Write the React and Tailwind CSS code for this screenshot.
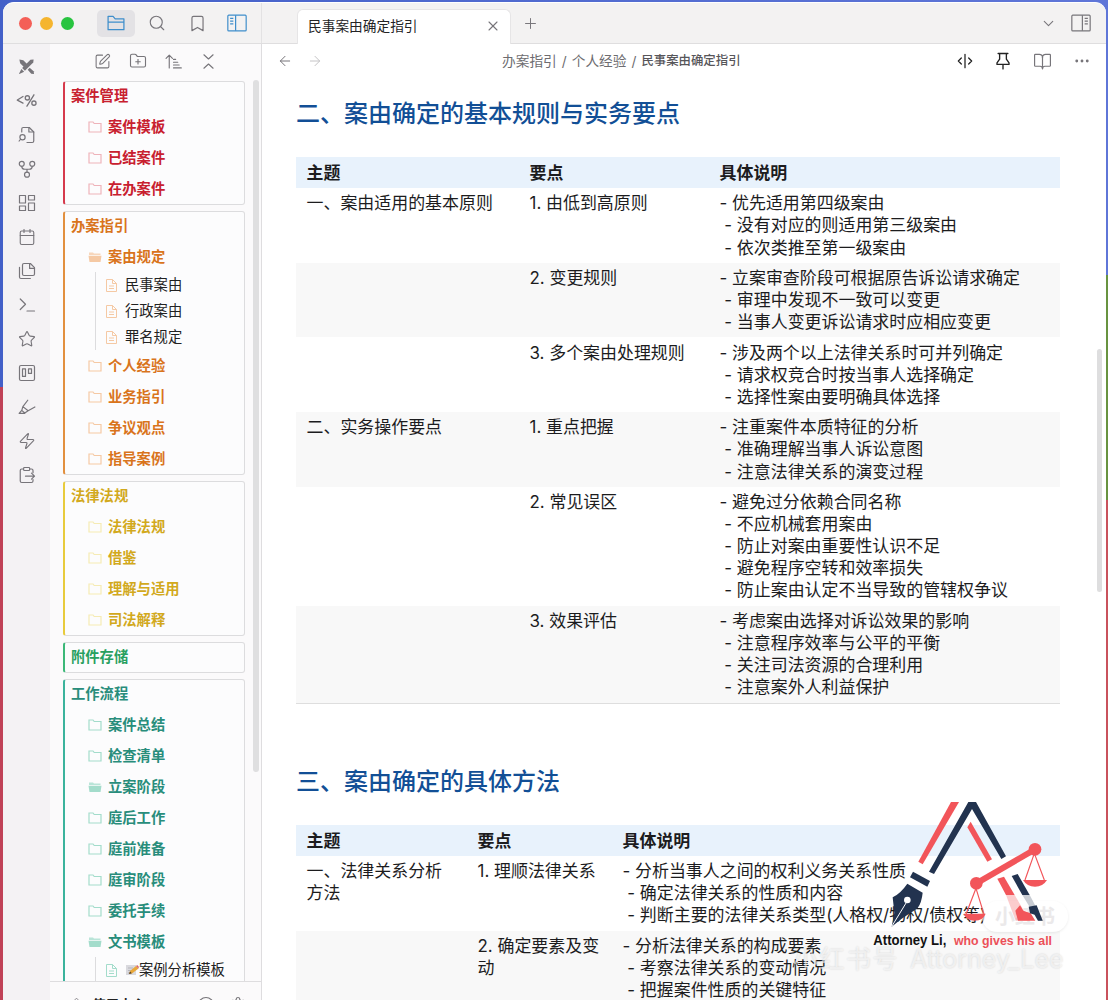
import React from "react";
import {
  Search, Bookmark, SquarePen, FolderPlus, ArrowLeft, ArrowRight, X, Plus,
  ChevronDown, BookOpen, Ellipsis, Calendar, Star,
  Zap, CircleQuestionMark, Settings, ChevronsUpDown,
} from "lucide-react";

const Svg = ({ size = 18, children, sw = 1.6, className = "" }) => (
  <svg width={size} height={size} viewBox="0 0 24 24" fill="none" stroke="currentColor" strokeWidth={sw}
    strokeLinecap="round" strokeLinejoin="round" className={className}>{children}</svg>
);

const PenTools = () => (
  <svg width="19" height="19" viewBox="0 0 24 24" fill="#77757a">
    <path d="M3 3l5 1 5 5-4 4-5-5z" />
    <path d="M21 3l-4 .6L6.500 14 10 17.500 20.500 7z" />
    <path d="M5.500 15l3.500 3.500L3 21.500 2.500 21z" />
    <path d="M13.500 16l2.500-2.500 5 4.500 .5 3.500-3.500-.5z" />
  </svg>
);
const Template = () => (
  <Svg size={21} sw={1.5}>
    <path d="M8 7.500L1.500 11.500 8 15" /><path d="M20.500 5.500L12.500 18.500" />
    <circle cx="13" cy="9" r="2.400" /><circle cx="20.500" cy="15" r="2.400" />
  </Svg>
);
const FileFind = () => (
  <Svg>
    <path d="M5 8V4a2 2 0 0 1 2-2h8l6 6v12a2 2 0 0 1-2 2h-7" /><path d="M14.500 2v6H21" />
    <circle cx="6" cy="15" r="3.500" /><path d="M3.500 17.500L1.500 20" />
  </Svg>
);
const Branches = () => (
  <Svg>
    <circle cx="5" cy="5" r="3.300" /><circle cx="19" cy="5" r="3.300" /><circle cx="12" cy="19.500" r="3.300" />
    <path d="M5 8.300q0 4 4 4h6q4 0 4-4M12 12.300v4" />
  </Svg>
);
const Dashboard = () => (
  <Svg><rect x="2" y="2" width="8" height="10" /><rect x="14" y="2" width="8" height="6" />
    <rect x="2" y="16" width="8" height="6" /><rect x="14" y="12" width="8" height="10" /></Svg>
);
const Copies = () => (
  <Svg><path d="M8 2h8.500L22 7.500V16a2 2 0 0 1-2 2H8a2 2 0 0 1-2-2V4a2 2 0 0 1 2-2z" />
    <path d="M15.500 2v6.500H22M2 7v13a2 2 0 0 0 2 2h12.500" /></Svg>
);
const Terminal = () => <Svg><path d="M3 4l7 7-7 7M12 20h10" /></Svg>;
const Board = () => (
  <Svg><rect x="2" y="2" width="20" height="20" rx="2" /><rect x="6" y="6.500" width="4" height="10" /><rect x="14" y="6.500" width="4" height="6" /></Svg>
);
const Marker = () => <Svg><path d="M13 3L6.500 11.500 13.500 17 22.500 12M6.500 11.500L5 16.500 9 20l4.500-3M5 16.500L1.500 20.500H9" /></Svg>;
const ClipOut = () => (
  <Svg><path d="M16 4h2a2 2 0 0 1 2 2v3M20 18v2a2 2 0 0 1-2 2H5a2 2 0 0 1-2-2V6a2 2 0 0 1 2-2h2" />
    <rect x="7.500" y="2" width="8" height="4" rx="1" /><path d="M10 13.500h12M18 9.500l4 4-4 4" /></Svg>
);
const SortAsc = () => (
  <Svg size={17}><path d="M6 21V3M1.500 7.500L6 3l4.500 4.500M12 9h3M12 13h6M12 17h8M12 21h11" /></Svg>
);
const Collapse = () => <Svg size={17}><path d="M5.500 2.500l6.500 6 6.500-6M5.500 21.500l6.500-6 6.500 6" /></Svg>;
const PanelIcon = ({ right, size = 21 }) => (
  <svg width={size} height={size} viewBox="0 0 24 24" fill="none" stroke="currentColor" strokeWidth="1.300"
    className={right ? "-scale-x-100" : ""}>
    <rect x="2" y="3.500" width="20" height="17" rx="1" /><path d="M10.500 3.500v17M4.500 7h3.500M4.500 10h3.500M4.500 13h3.500" />
  </svg>
);
const SplitIcon = () => <Svg size={16} sw={1.9}><path d="M12 2v20M6.500 7.500L2 12l4.500 4.500M17.500 7.500L22 12l-4.500 4.500" /></Svg>;
const PinIcon = () => <Svg size={18} sw={1.8}><path d="M5.500 2h13M7.500 2v7.500L4 14.500v2h16v-2l-3.500-5V2M12 16.500v6" /></Svg>;

const FolderGlyph = ({ open }) =>
  open ? (
    <svg width="14" height="12" viewBox="0 0 14 12" fill="currentColor" className="shrink-0">
      <path d="M1 4V1.500h4l1 1h6.500V4z" opacity=".75" /><path d="M.5 4.800h13l-1 6.200h-11z" />
    </svg>
  ) : (
    <svg width="14" height="12" viewBox="0 0 14 12" fill="none" stroke="currentColor" strokeWidth="1.200" className="shrink-0">
      <path d="M1 11V1h4l1.200 1.500H13V11z" />
    </svg>
  );
const FileGlyph = () => (
  <svg width="11" height="13" viewBox="0 0 11 13" fill="none" stroke="currentColor" strokeWidth="1" className="shrink-0">
    <path d="M.5.500h6l4 4v8H.5zM6.500.500v4h4M3 7h5M3 9.500h5" />
  </svg>
);
const Memo = () => (
  <svg width="13" height="14" viewBox="0 0 13 14" className="shrink-0">
    <path d="M0 2h10v10H0z" fill="#d9d9de" /><path d="M2 5h5M2 7.500h4M2 10h3" stroke="#b5b5bb" />
    <path d="M3 11l1-3 6-5 2.500 2.500-6.500 5z" fill="#e9a83a" /><path d="M10 3l1.200-1L13 4l-.8 1.500z" fill="#d5666a" />
    <path d="M3 11l1-2.500 1.800 1.700z" fill="#4a3b2e" />
  </svg>
);

const groups = [
  { title: "案件管理", text: "text-[#c8202f]", edge: "border-l-[#d63a4c]", icon: "text-[#eeb3ba]",
    items: [["d", "案件模板"], ["d", "已结案件"], ["d", "在办案件"]] },
  { title: "办案指引", text: "text-[#d9741c]", edge: "border-l-[#e2903f]", icon: "text-[#f5c9a4]",
    items: [["o", "案由规定"], ["f", "民事案由"], ["f", "行政案由"], ["f", "罪名规定"], ["d", "个人经验"], ["d", "业务指引"], ["d", "争议观点"], ["d", "指导案例"]] },
  { title: "法律法规", text: "text-[#d2a91d]", edge: "border-l-[#e8cb3c]", icon: "text-[#f5ebb4]",
    items: [["d", "法律法规"], ["d", "借鉴"], ["d", "理解与适用"], ["d", "司法解释"]] },
  { title: "附件存储", text: "text-[#28a060]", edge: "border-l-[#3cb878]", icon: "text-[#a9e0c3]", items: [] },
  { title: "工作流程", text: "text-[#288d7b]", edge: "border-l-[#3bb39c]", icon: "text-[#a3dccb]",
    items: [["d", "案件总结"], ["d", "检查清单"], ["o", "立案阶段"], ["d", "庭后工作"], ["d", "庭前准备"], ["d", "庭审阶段"], ["d", "委托手续"], ["o", "文书模板"], ["m", "案例分析模板"]] },
];

function Group({ g }) {
  return (
    <section className={`w-[182px] shrink-0 rounded-[3px] border border-l-2 border-[#dcdcde] bg-[#fcfcfd] ${g.edge}`}>
      <h3 className={`flex h-[29px] items-center pb-[2px] pl-[6px] font-bold ${g.text}`}>{g.title}</h3>
      {g.items.map(([kind, name]) =>
        kind === "f" || kind === "m" ? (
          <div key={name} className="ml-[30px] flex h-[26px] items-center border-l border-[#dcdcde] pl-[10px]">
            <span className={g.icon}><FileGlyph /></span>
            <span className={`flex items-center whitespace-nowrap text-[#222] ${kind === "m" ? "pl-[9px]" : "pl-2"}`}>
              {kind === "m" && <Memo />}{name}
            </span>
          </div>
        ) : (
          <div key={name} className="flex h-[31px] items-center gap-[6px] pl-[23px]">
            <span className={g.icon}><FolderGlyph open={kind === "o"} /></span>
            <span className={`font-bold ${g.text}`}>{name}</span>
          </div>
        )
      )}
    </section>
  );
}

const table1 = [
  ["一、案由适用的基本原则", "1. 由低到高原则", ["优先适用第四级案由", "没有对应的则适用第三级案由", "依次类推至第一级案由"]],
  ["", "2. 变更规则", ["立案审查阶段可根据原告诉讼请求确定", "审理中发现不一致可以变更", "当事人变更诉讼请求时应相应变更"]],
  ["", "3. 多个案由处理规则", ["涉及两个以上法律关系时可并列确定", "请求权竞合时按当事人选择确定", "选择性案由要明确具体选择"]],
  ["二、实务操作要点", "1. 重点把握", ["注重案件本质特征的分析", "准确理解当事人诉讼意图", "注意法律关系的演变过程"]],
  ["", "2. 常见误区", ["避免过分依赖合同名称", "不应机械套用案由", "防止对案由重要性认识不足", "避免程序空转和效率损失", "防止案由认定不当导致的管辖权争议"]],
  ["", "3. 效果评估", ["考虑案由选择对诉讼效果的影响", "注意程序效率与公平的平衡", "关注司法资源的合理利用", "注意案外人利益保护"]],
];
const table2 = [
  ["一、法律关系分析方法", "1. 理顺法律关系", ["分析当事人之间的权利义务关系性质", "确定法律关系的性质和内容", "判断主要的法律关系类型(人格权/物权/债权等)"]],
  ["", "2. 确定要素及变动", ["分析法律关系的构成要素", "考察法律关系的变动情况", "把握案件性质的关键特征"]],
];

function Table({ rows, cols }) {
  const row = `grid ${cols} py-[4.100px]`;
  return (
    <div className="w-[764px] border-b border-[#dedede] text-[16.950px] leading-[22.150px] text-[#1c1c1e]">
      <div className={`grid ${cols} bg-[#e8f2fc] pb-[4.100px] pt-[4.600px] font-bold`}>
        {["主题", "要点", "具体说明"].map((h) => <div key={h} className="pl-[10.500px]">{h}</div>)}
      </div>
      {rows.map(([a, b, list], i) => (
        <div key={i} className={`${row} ${i % 2 ? "bg-[#f8f8f8]" : ""}`}>
          <div className="px-[10.500px]">{a}</div>
          <div className="pl-[10.500px] pr-2">{b}</div>
          <div className="whitespace-pre pl-[10.500px]">
            {list.map((t, k) => <div key={t}>{(k ? " - " : "- ") + t}</div>)}
          </div>
        </div>
      ))}
    </div>
  );
}

function Logo() {
  return (
    <svg width="268" height="220" viewBox="0 0 804 660" className="absolute left-[840px] top-[780px]">
      <g fill="#f2555a">
        <path d="M333 66h24L248 253l-13-8z" />
        <path d="M382 142l10-17 64 113-14 7z" />
        <path d="M472 296l20-6 32 55h-26z" />
        <path d="M498 345h26l45 77h-42z" opacity=".3" />
        <path d="M526 392l14-16 10 16 22 8 14 22h-52z" />
        <circle cx="409" cy="310" r="19" /><circle cx="585" cy="208" r="19" />
        <path d="M409 310L585 208" stroke="#f2555a" strokeWidth="18" />
        <path d="M549 300h72q-12 20-36 20t-36-20z" /><path d="M371 401h66q-8 21-33 21t-33-21z" />
      </g>
      <path d="M583 220l-28 80M583 220l30 80M408 325l-30 78M408 325l24 78" stroke="#f2555a" strokeWidth="3.500" fill="none" />
      <g fill="#22334f">
        <path d="M267 275L385 66h23l90 163-14 8L396 87 282 282z" />
        <path d="M515 288l18-6 36 63h-22z" />
        <path d="M547 345h22l41 77h-16z" opacity=".25" />
        <path d="M566 380l24-4 18 46h-14l-10-18-14-4z" />
        <path d="M219 275l51 28-8 17-52-28z" />
        <path d="M202 311l46 27q-3 30-15 46l-50 34-28 22 8-42-5-46q24-12 44-41z" />
      </g>
      <circle cx="202" cy="360" r="10" fill="#fff" /><path d="M200 366l-44 72" stroke="#fff" strokeWidth="3" />
      <text x="100" y="495" textLength="219" lengthAdjust="spacingAndGlyphs" fontSize="42" fontWeight="700" fill="#111" fontFamily="Liberation Sans, sans-serif">Attorney Li,</text>
      <text x="342" y="495" textLength="294" lengthAdjust="spacingAndGlyphs" fontSize="39" fontWeight="700" fill="#ec5058" fontFamily="Liberation Sans, sans-serif">who gives his all</text>
    </svg>
  );
}

export default function App() {
  const ic = { size: 18, strokeWidth: 1.5 };
  const ribbon = [<PenTools />, <Template />, <FileFind />, <Branches />, <Dashboard />, <Calendar {...ic} />, <Copies />,
    <Terminal />, <Star {...ic} />, <Board />, <Marker />, <Zap {...ic} />, <ClipOut />];
  return (
    <div className="relative h-[1000px] w-[1108px] overflow-hidden bg-[linear-gradient(90deg,#4360c8,#5f76d8)] font-[Inter,'Noto_Sans_CJK_SC',sans-serif]">
      <div className="absolute bottom-0 left-0 h-[613px] w-1 bg-[#c04257]" />
      <div className="absolute right-0 top-[275px] h-[225px] w-1 bg-[#689340]" />
      <div className="absolute bottom-0 right-0 h-[500px] w-1 bg-[#c9525c]" />
      <div className="relative ml-[3px] mt-[2px] flex h-[998px] w-[1103px] flex-col overflow-hidden rounded-t-[11px] border-t border-white bg-white">
        <header className="flex h-[41px] shrink-0 border-b border-[#dfdedf] bg-[#f3f2f2] text-[#77757a]">
          <div className="flex w-[259px] shrink-0 items-center border-r border-[#e3e2e3] pl-4">
            <i className="mr-2 h-[13px] w-[13px] rounded-full bg-[#f45f57]" />
            <i className="mr-2 h-[13px] w-[13px] rounded-full bg-[#f5b52e]" />
            <i className="h-[13px] w-[13px] rounded-full bg-[#28c440]" />
            <span className="ml-[23px] flex h-[27px] w-[38px] items-center justify-center rounded-[5px] bg-[#e3e2e5] text-[#3f8ecb]">
              <Svg size={20} sw={1.500}><path d="M2.500 20V4h6l2.500 3h10.500v13zM2.500 11h19" /></Svg>
            </span>
            <Search size={18} strokeWidth={1.500} className="ml-[13px]" />
            <Bookmark size={19} strokeWidth={1.500} className="ml-[22px]" />
            <span className="ml-[19px] text-[#3f8ecb]"><PanelIcon size={22} /></span>
          </div>
          <div className="ml-[35px] mt-[6px] flex h-[35px] w-[214px] items-center justify-between rounded-t-[6px] border border-b-0 border-[#e6e5e6] bg-white pb-[2px] pl-[10px] pr-[9px]">
            <span className="text-[13.700px] text-[#232325]">民事案由确定指引</span>
            <X size={16} strokeWidth={1.600} />
          </div>
          <Plus size={17} strokeWidth={1.400} className="ml-[11px] mt-3" />
          <div className="ml-auto flex items-center gap-[13px] pr-[14px]">
            <ChevronDown size={17} strokeWidth={1.500} />
            <PanelIcon right size={22} />
          </div>
        </header>
        <div className="flex min-h-0 flex-1">
          <nav className="flex w-[47px] shrink-0 flex-col items-center bg-[#f4f2f4] pt-[5.500px] text-[#77757a]">
            {ribbon.map((el, i) => <span key={i} className="flex h-[34px] items-center">{el}</span>)}
          </nav>
          <aside className="flex w-[212px] shrink-0 flex-col border-r border-[#dedddf] bg-[#fbfafb] text-[14.300px]">
            <div className="flex h-9 shrink-0 items-center gap-[18px] pb-[2px] pl-[44px] text-[#77757a]">
              <SquarePen size={17} strokeWidth={1.500} /><FolderPlus size={18} strokeWidth={1.500} /><SortAsc /><Collapse />
            </div>
            <div className="flex h-[902px] shrink-0 overflow-hidden border-b border-[#dedddf]">
              <div className="ml-[13px] mt-[1px] flex h-[910px] flex-col gap-[6px]">
                {groups.map((g) => <Group key={g.title} g={g} />)}
              </div>
              <div className="ml-[8px] h-[692px] w-[6px] rounded-full bg-[#dfdfe0]" />
            </div>
            <div className="flex h-[30px] shrink-0 items-start pl-[20px] pt-[14px] text-[#77757a]">
              <ChevronsUpDown size={13} strokeWidth={1.500} />
              <span className="ml-[9px] text-[13.500px] font-bold leading-[18px] text-[#222]">使用中心</span>
              <CircleQuestionMark size={18} strokeWidth={1.500} className="ml-auto" />
              <Settings size={18} strokeWidth={1.500} className="ml-[14px] mr-[14px]" />
            </div>
          </aside>
          <main className="flex min-w-0 flex-1 flex-col">
            <div className="flex h-[36px] shrink-0 items-center pb-[2px] text-[#77757a]">
              <ArrowLeft size={16} strokeWidth={1.500} className="ml-[15px]" />
              <ArrowRight size={16} strokeWidth={1.500} className="ml-[14px] text-[#c5c4c6]" />
              <div className="ml-[179px] flex gap-[5px] whitespace-nowrap text-[13.700px] text-[#6d6c70]">
                <span>办案指引</span><span>/</span><span>个人经验</span><span>/</span>
                <span className="text-[12.400px] font-medium leading-[20.500px] text-[#57565a]">民事案由确定指引</span>
              </div>
              <div className="ml-auto flex items-center gap-[21px] pr-[15px]">
                <span className="text-[#222]"><SplitIcon /></span>
                <span className="text-[#222]"><PinIcon /></span>
                <BookOpen size={19} strokeWidth={1.500} />
                <Ellipsis size={18} strokeWidth={1.800} />
              </div>
            </div>
            <article className="flex h-[918px] shrink-0 flex-col pl-[34px] pr-[3px]">
              <h2 className="mt-[16px] h-9 shrink-0 text-[24px] font-medium leading-9 text-[#124f96]">二、案由确定的基本规则与实务要点</h2>
              <div className="mt-[25.300px] shrink-0"><Table rows={table1} cols="grid-cols-[223px_190px_351px]" /></div>
              <h2 className="mt-[60px] h-9 shrink-0 text-[24px] font-medium leading-9 text-[#124f96]">三、案由确定的具体方法</h2>
              <div className="mt-[25.500px] shrink-0"><Table rows={table2} cols="grid-cols-[171px_145px_448px]" /></div>
            </article>
          </main>
        </div>
      </div>
      <div className="absolute left-[1097px] top-[349px] h-[243px] w-[5px] rounded-full bg-[#dededf]" />
      <div className="absolute left-[982px] top-[901px] flex h-[31px] w-[86px] items-center justify-center rounded-full bg-white/65 text-[20px] font-bold text-[#ebe9ea] shadow-[0_1px_3px_rgba(0,0,0,0.08)]">小红书</div>
      <Logo />
      <div className="absolute left-[793px] top-[943px] flex gap-[11px] whitespace-nowrap text-[25px] leading-[32px] text-white/60 [text-shadow:0_0_2px_rgba(0,0,0,0.16)]">
        <span className="tracking-[1.500px]">小红书号</span><span>Attorney_Lee</span>
      </div>
    </div>
  );
}
